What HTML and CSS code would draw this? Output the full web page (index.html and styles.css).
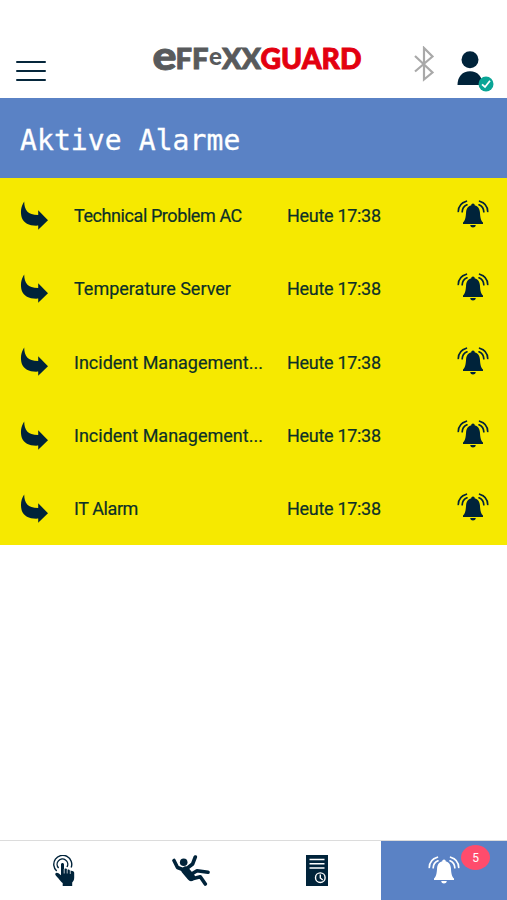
FILE: index.html
```html
<!DOCTYPE html>
<html lang="de">
<head>
    <meta charset="UTF-8">
    <meta name="viewport" content="width=device-width, initial-scale=1.0">
    <title>effexx GUARD</title>
    <link rel="stylesheet" href="styles.css">
</head>
<body>
    <!-- shared icons -->
    <svg class="sprite" aria-hidden="true">
        <symbol id="arrow" viewBox="0 0 28 30">
            <path d="M4.2 0.5C4.4 9.5 7.5 13.6 18.2 14V9.3L28 19.2L18.2 28.8V24.6C9.5 25.1 4 22.3 1.9 17C.2 11.5.8 5.5 4.2 .5Z"/>
        </symbol>
        <symbol id="bell" viewBox="0 0 32 28">
            <path d="M16 3.4C17.1 3.4 17.7 4.2 17.7 5.2C21.2 6 22.6 8.8 22.9 12C23.3 17.7 23.7 20.3 26 22.6V24H6V22.6C8.3 20.3 8.7 17.7 9.1 12C9.4 8.8 10.8 6 14.3 5.2C14.3 4.2 14.9 3.4 16 3.4ZM13.2 25H18.8C18.5 26.8 17.4 27.5 16 27.5C14.6 27.5 13.5 26.8 13.2 25Z"/>
            <path d="M1.3 11.5C1.4 6.6 4.5 2.6 9.4 1.2M5.2 11.8C5.3 8.6 7.2 6 10 4.8M30.7 11.5C30.6 6.6 27.5 2.6 22.6 1.2M26.8 11.8C26.7 8.6 24.8 6 22 4.8" fill="none" stroke="currentColor" stroke-width="1.7" stroke-linecap="round"/>
        </symbol>
    </svg>

    <header class="topbar">
        <button class="menu-button" aria-label="Menü">
            <span></span>
            <span></span>
            <span></span>
        </button>
        <svg class="logo" viewBox="0 -16 210 52" role="img" aria-label="effexx GUARD">
            <g class="logo-grey">
                <text x="-.5" y="23.6" font-size="39" textLength="24" lengthAdjust="spacingAndGlyphs">e</text>
                <text x="22.5" y="23.3" font-size="28" textLength="33" lengthAdjust="spacingAndGlyphs">FF</text>
                <text x="69" y="23.3" font-size="28" textLength="39" lengthAdjust="spacingAndGlyphs">XX</text>
                <text class="logo-small" x="56" y="18.5" font-size="24" textLength="13" lengthAdjust="spacingAndGlyphs">e</text>
            </g>
            <text class="logo-red" x="107.5" y="23.3" font-size="28" textLength="101" lengthAdjust="spacingAndGlyphs">GUARD</text>
        </svg>
        <svg class="bluetooth" viewBox="0 0 22 36">
            <path d="M2 10L19.5 26.5L11 33.5V2L19.5 10.5L2 25.5"/>
        </svg>
        <div class="user">
            <svg class="user-icon" viewBox="0 0 26 34">
                <circle cx="13" cy="8.7" r="8.5"/>
                <path d="M0.5 34C.5 25.5 5.5 20.3 13 20.3S25.5 25.5 25.5 34Z"/>
            </svg>
            <svg class="user-check" viewBox="0 0 16 16">
                <circle cx="8" cy="8" r="7.5"/>
                <path d="M4 8.3L7 11L12 4.7"/>
            </svg>
        </div>
    </header>

    <h1 class="title">Aktive Alarme</h1>

    <main class="alarms">
        <div class="alarm">
            <svg class="arrow"><use href="#arrow"/></svg>
            <span class="name tight">Technical Problem AC</span>
            <span class="time">Heute 17:38</span>
            <svg class="bell"><use href="#bell"/></svg>
        </div>
        <div class="alarm">
            <svg class="arrow"><use href="#arrow"/></svg>
            <span class="name">Temperature Server</span>
            <span class="time">Heute 17:38</span>
            <svg class="bell"><use href="#bell"/></svg>
        </div>
        <div class="alarm">
            <svg class="arrow"><use href="#arrow"/></svg>
            <span class="name">Incident Management...</span>
            <span class="time">Heute 17:38</span>
            <svg class="bell"><use href="#bell"/></svg>
        </div>
        <div class="alarm">
            <svg class="arrow"><use href="#arrow"/></svg>
            <span class="name">Incident Management...</span>
            <span class="time">Heute 17:38</span>
            <svg class="bell"><use href="#bell"/></svg>
        </div>
        <div class="alarm">
            <svg class="arrow"><use href="#arrow"/></svg>
            <span class="name tight">IT Alarm</span>
            <span class="time">Heute 17:38</span>
            <svg class="bell"><use href="#bell"/></svg>
        </div>
    </main>

    <nav class="tabs">
        <a class="tab">
            <svg class="touch" viewBox="0 0 22 32">
                <path d="M8 9.5C8 7.5 11 7.5 11 9.5V14.2C12 13.1 14 13.5 14 15C15 14 17 14.5 17 16C18.3 15.2 21.2 16 21.2 17.8V22.5C21.2 25 20.4 26 19.2 27.5V31H9.7V28C8 26.8 5 22.8 2.8 20.5C1.2 18.5 3.5 16.8 5.5 18.3L8 20.3Z"/>
                <path class="ring" d="M5.6 13A5.3 5.3 0 1 1 14 12M3.7 16A9 9 0 1 1 18.2 12.5"/>
                <path class="gap" d="M11.2 14V18.5M14.2 15V18.5M17.3 16V19"/>
            </svg>
        </a>
        <a class="tab">
            <svg class="fall" viewBox="0 0 38 31">
                <circle cx="11.7" cy="7.2" r="3.8"/>
                <path class="torso" d="M13.5 15.5L19 22"/>
                <path class="limb" d="M2 5.5L5.5 12.5L12 15M23.3 2L20.6 9L14 14.2M18 20L25 15.8L36 17.2M19.5 24L28.3 21.8L33.3 29"/>
            </svg>
        </a>
        <a class="tab">
            <svg class="log" viewBox="0 0 22 31">
                <path d="M0 0H22V31H0Z"/>
                <path class="line" d="M3.5 4.5H18.5M3.5 8.8H18.5M3.5 13H18.5"/>
                <circle class="clock" cx="14.3" cy="22.7" r="4.8"/>
                <path class="clock" d="M14.3 19.5V23L16.8 25"/>
            </svg>
        </a>
        <a class="tab active">
            <svg class="bell"><use href="#bell"/></svg>
            <span class="badge">5</span>
        </a>
    </nav>
</body>
</html>
```
FILE: styles.css
```css
* {
    box-sizing: border-box;
}

body {
    margin: 0;
    height: 100vh;
    display: flex;
    flex-direction: column;
    background: #fff;
    color: #05263b;
    font-family: Roboto, sans-serif;
}

svg {
    display: block;
    flex: none;
    fill: currentColor;
}

.sprite {
    position: absolute;
    width: 0;
    height: 0;
}

.topbar {
    display: flex;
    align-items: flex-start;
    height: 98px;
    flex: none;
    padding: 46px 12px 0 16px;
}

.menu-button {
    display: flex;
    flex-direction: column;
    gap: 7px;
    width: 30px;
    margin-top: 15px;
    padding: 0;
    border: 0;
    background: none;
}

.menu-button span {
    height: 2px;
    border-radius: 1px;
    background: #05263b;
}

.logo {
    width: 210px;
    height: 52px;
    margin: -16px 0 0 107px;
    overflow: visible;
    font-family: Lato, sans-serif;
    font-weight: 900;
}

.logo-grey {
    fill: #585a5c;
    stroke: #585a5c;
    stroke-width: 0.9px;
}

.logo-small {
    stroke: #fff;
    stroke-width: 2px;
    paint-order: stroke;
}

.logo-red {
    fill: #e3000f;
    stroke: #e3000f;
    stroke-width: 0.9px;
}

.bluetooth {
    width: 22px;
    height: 36px;
    margin-left: 50px;
    fill: none;
    stroke: #a9a9a9;
    stroke-width: 2.2;
}

.user {
    position: relative;
    margin: 5px 0 0 22px;
    color: #00233a;
}

.user-icon {
    width: 26px;
    height: 34px;
}

.user-check {
    position: absolute;
    left: 21px;
    top: 25px;
    width: 16px;
    height: 16px;
    fill: #0aa596;
}

.user-check path {
    fill: none;
    stroke: #fff;
    stroke-width: 1.8;
}

.title {
    display: flex;
    align-items: center;
    flex: none;
    height: 80px;
    margin: 0;
    padding: 5px 20px 0;
    background: #5a82c5;
    color: #fff;
    font: 28px "DejaVu Sans Mono", monospace;
    letter-spacing: 0.1px;
    -webkit-text-stroke: 0.3px;
}

.alarms {
    background: #f6e900;
    padding-bottom: 0.5px;
}

.alarm {
    display: grid;
    grid-template-columns: 54px 213px 1fr 32px;
    align-items: center;
    height: 73.3px;
    padding: 2px 18px 0 20px;
    font-size: 18px;
    color: #0c3028;
    -webkit-text-stroke: 0.2px;
}

.alarm .arrow {
    width: 28px;
    height: 30px;
    color: #00233a;
}

.name,
.time {
    white-space: nowrap;
}

.name.tight {
    letter-spacing: -0.42px;
}

.time {
    letter-spacing: -0.3px;
}

.bell {
    width: 32px;
    height: 28px;
}

.alarm .bell {
    color: #00233a;
    margin-top: -3px;
}

.tabs {
    display: grid;
    grid-template-columns: 127px 127px 127px 126px;
    height: 60px;
    margin-top: auto;
    border-top: 1px solid #dcdcdc;
    color: #00233a;
}

.tab {
    position: relative;
    display: flex;
    align-items: center;
    justify-content: center;
}

.tab.active {
    background: #5a82c5;
    color: #fff;
}

.tab .bell {
    margin-top: -2px;
}

.touch {
    width: 22px;
    height: 32px;
}

.ring {
    fill: none;
    stroke: currentColor;
    stroke-width: 1.4;
}

.gap {
    fill: none;
    stroke: #fff;
    stroke-width: 0.7;
}

.fall {
    width: 38px;
    height: 31px;
}

.torso,
.limb {
    fill: none;
    stroke: currentColor;
    stroke-linecap: round;
    stroke-linejoin: round;
}

.torso {
    stroke-width: 8;
}

.limb {
    stroke-width: 3.6;
}

.log {
    width: 22px;
    height: 31px;
    margin-right: 2px;
}

.line,
.clock {
    fill: none;
    stroke: #fff;
    stroke-width: 1.4;
}

.badge {
    position: absolute;
    top: 4px;
    right: 17px;
    width: 29px;
    height: 25px;
    border-radius: 50%;
    background: #ff4c6c;
    font-size: 12px;
    line-height: 26px;
    text-align: center;
}
```
